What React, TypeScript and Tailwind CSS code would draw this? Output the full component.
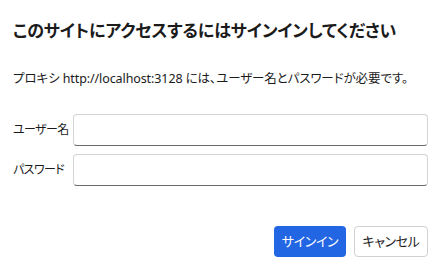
import React from 'react';

const font = { fontFamily: '"Noto Sans", "Noto Sans CJK JP", sans-serif' };

export default function App() {
  return (
    <div
      className="w-[443px] h-[271px] bg-white text-[#1b1b1b] px-[13px] pt-[20px] flex flex-col [font-feature-settings:'palt']"
      style={font}
    >
      <h1 className="text-[17px] font-bold leading-[22px] tracking-[-0.15px] whitespace-nowrap">
        このサイトにアクセスするにはサインインしてください
      </h1>
      <p className="mt-[28px] text-[12.5px] leading-[18px] whitespace-nowrap tracking-[-0.1px]">
        プロキシ http://localhost:3128 には、ユーザー名とパスワードが必要です。
      </p>
      <div className="mt-[26px] flex flex-col gap-[8px] pr-[2px]">
        <label className="flex items-center">
          <span className="w-[60px] shrink-0 text-[12px] whitespace-nowrap tracking-[-0.6px]">ユーザー名</span>
          <input
            type="text"
            className="flex-1 h-[32px] rounded-[4px] border border-[#d4d4d4] border-b-[#6b6b6b] outline-none bg-white"
          />
        </label>
        <label className="flex items-center">
          <span className="w-[60px] shrink-0 text-[12px] whitespace-nowrap tracking-[-0.6px]">パスワード</span>
          <input
            type="password"
            className="flex-1 h-[32px] rounded-[4px] border border-[#d4d4d4] border-b-[#6b6b6b] outline-none bg-white"
          />
        </label>
      </div>
      <div className="mt-[40px] flex justify-end gap-[8px] pr-[2px]">
        <button className="w-[72px] h-[31px] rounded-[4px] bg-[#2266e3] text-white text-[13px] whitespace-nowrap tracking-[-0.4px]">
          サインイン
        </button>
        <button className="w-[74px] h-[31px] rounded-[4px] border border-[#d1d1d1] bg-white text-[#1b1b1b] text-[13px] whitespace-nowrap tracking-[-0.4px]">
          キャンセル
        </button>
      </div>
    </div>
  );
}
